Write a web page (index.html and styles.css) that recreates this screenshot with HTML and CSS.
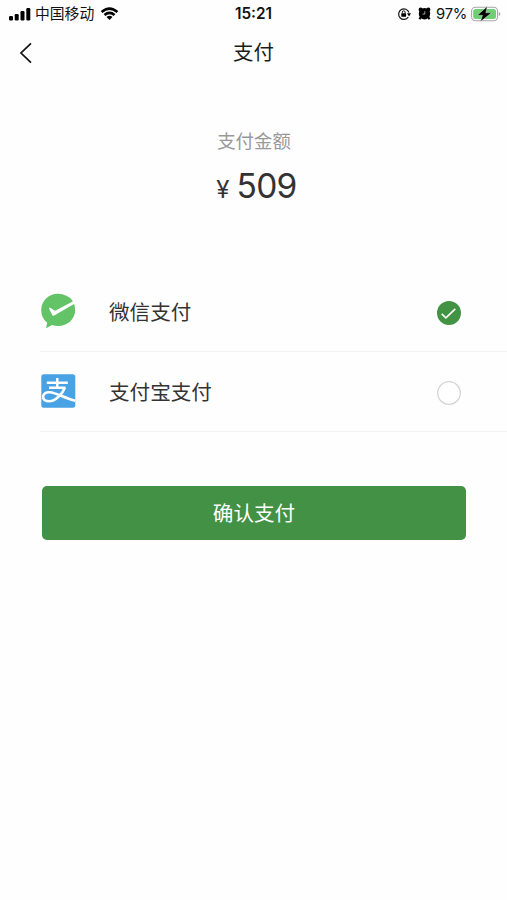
FILE: index.html
```
<!DOCTYPE html>
<html lang="zh-CN">
<head>
<meta charset="utf-8">
<title>支付</title>
<link rel="stylesheet" href="styles.css">
</head>
<body>
<header class="status">
  <div class="status-left">
    <svg class="signal" width="22" height="14" viewBox="0 0 22 14"><rect x="0" y="9" width="4" height="4.500" rx="1.200"/><rect x="5.700" y="7" width="4" height="6.500" rx="1.200"/><rect x="11.500" y="4" width="4" height="9.500" rx="1.200"/><rect x="17.300" y="1" width="4" height="12.500" rx="1.200"/></svg>
    <span class="carrier">中国移动</span>
    <svg class="wifi" width="19" height="14" viewBox="0 0 20 15"><path d="M1.500 5.400Q10-2 18.500 5.400M4.600 8.600Q10 4 15.400 8.600" fill="none" stroke="#000" stroke-width="2.700"/><path d="M6.800 10.800Q10 8.200 13.200 10.800L10 14Z"/></svg>
  </div>
  <time class="clock">15:21</time>
  <div class="status-right">
    <svg class="lock" width="14" height="14" viewBox="0 0 14 14"><path d="M11.300 10.200A5.300 5.300 0 1 1 12 5.500" fill="none" stroke="#111" stroke-width="1.200"/><path d="M10 6.300h4L12 9.400Z"/><rect x="4.300" y="6.200" width="4.800" height="3.600" rx=".6"/><path d="M5.300 6.500V5.200a1.400 1.400 0 0 1 2.800 0v1.300" fill="none" stroke="#111" stroke-width="1"/></svg>
    <svg class="alarm" width="13" height="13" viewBox="0 0 13 13"><circle cx="6.500" cy="6.700" r="5.700"/><circle cx="2.700" cy="2.700" r="2.100"/><circle cx="10.300" cy="2.700" r="2.100"/><path d="M2.800 10L1.500 12.300M10.200 10l1.300 2.300" stroke="#000" stroke-width="2.200"/><path d="M6.800 4.200v2.900H4.500" fill="none" stroke="#ddd" stroke-width=".7"/></svg>
    <span class="percent">97%</span>
    <svg class="battery" width="30" height="16" viewBox="0 0 30 16"><rect x=".6" y="1.200" width="26" height="13.600" rx="4" fill="#fff" stroke="#a5a8a5" stroke-width="1.100"/><rect x="2.200" y="2.900" width="22.800" height="10.200" rx="2.500" fill="#70cf74"/><path d="M27.800 6v4q1.600-.7 1.600-2t-1.600-2Z" fill="#a5a8a5"/><path d="M16.200 .4L6.500 9.200h5l-2 6.400L20.500 6.800h-5.700Z" stroke="#e9f8e9" stroke-width=".4"/></svg>
  </div>
</header>
<nav class="navbar">
  <svg class="back" width="14" height="22" viewBox="0 0 14 22"><path d="M12 1.300L2 11l10 9.700" fill="none" stroke="#111" stroke-width="1.700"/></svg>
  <h1 class="title">支付</h1>
</nav>
<main>
  <section class="summary">
    <p class="label">支付金额</p>
    <p class="amount"><span class="yen">¥</span><span class="number">509</span></p>
  </section>
  <section class="methods">
    <div class="method">
      <svg class="logo" width="36" height="36" viewBox="0 0 36 36"><path d="M18 .8C8.400.8 1.200 8 1.200 17.300c0 5.200 2.200 9.500 6 12.400L6 35.200l6-3.300c2 .8 4 1.100 6 1.100C27.600 33 35.200 26 35.200 17c0-5-2-9.500-5.400-12.300Z" fill="#62c466"/><path d="M9.200 14.800q1-.4 2 .4l2.800 2.100q.8.500 1.700.1L33.500 8l1 2.800L14.200 22.400q-1.500.9-2.100-.6l-2.900-5.700q-.5-1 0-1.300Z" fill="#fff"/><path d="M18 .8c6 0 11.300 2.900 14.400 7.400L25 11.800 16 4Z" fill="#62c466"/></svg>
      <span class="name">微信支付</span>
      <svg class="radio" width="24" height="24" viewBox="0 0 24 24"><circle cx="12" cy="12" r="12" fill="#429343"/><path d="M4.700 12.800l4.200 4 9.400-9" fill="none" stroke="#fff" stroke-width="1.600"/></svg>
    </div>
    <div class="method">
      <svg class="logo" width="36" height="36" viewBox="0 0 36 36"><rect x="1.300" y="1.300" width="34" height="33.500" rx="2.500" fill="#48a2e4"/><path d="M17.300 5v9M6.800 9.700h21M9 14.700h16.500" fill="none" stroke="#fff" stroke-width="2.400"/><path d="M24.800 14.700C22.300 21.500 15 28.300 9.200 28.300c-4.300 0-6.300-2-6.100-4.700.2-3 3.200-4.700 6.900-4.300C16.500 19.900 25 25.300 35.300 27.800" fill="none" stroke="#fff" stroke-width="2.600"/></svg>
      <span class="name">支付宝支付</span>
      <svg class="radio" width="24" height="24" viewBox="0 0 24 24"><circle cx="12" cy="12" r="11.300" fill="#fff" stroke="#d5d5d5" stroke-width="1.300"/></svg>
    </div>
  </section>
  <button class="confirm" type="button">确认支付</button>
</main>
</body>
</html>
```
FILE: styles.css
```
* { box-sizing: border-box; }
body {
  margin: 0;
  min-height: 900px;
  background: #fefefe;
  color: #333;
  font-family: Inter, "Noto Sans CJK SC", sans-serif;
}
svg { display: block; flex: none; }
p, h1 { margin: 0; }
.status {
  display: grid;
  grid-template-columns: 1fr auto 1fr;
  align-items: center;
  height: 27px;
  padding: 0 6px 0 9px;
  color: #111;
}
.status-left, .status-right { display: flex; align-items: center; }
.status-right { justify-content: flex-end; }
.carrier { margin-left: 4px; padding-top: 1px; font-size: 14.8px; line-height: 22px; }
.wifi { margin-left: 6px; }
.clock { margin-right: 3px; font-size: 15.3px; font-weight: 600; line-height: 20px; }
.alarm { margin-left: 7px; }
.percent { margin-left: 5px; font-size: 14.8px; letter-spacing: -.3px; }
.battery { margin-left: 4px; }
.navbar {
  display: grid;
  grid-template-columns: 1fr auto 1fr;
  align-items: center;
  height: 52px;
  padding: 0 19px;
}
.title { color: #1c1c1c; font-size: 20.5px; font-weight: 400; line-height: 30px; }
.summary {
  display: flex;
  flex-direction: column;
  align-items: center;
  height: 193px;
  padding-top: 48px;
}
.label { padding-left: 1px; color: #999; font-size: 18.4px; line-height: 28px; }
.amount { display: flex; align-items: baseline; margin-top: 10px; padding-left: 6px; line-height: 42px; }
.yen { margin-right: 7px; font-size: 24px; }
.number { font-size: 33.5px; letter-spacing: -.7px; }
.methods { margin-left: 40px; }
.method {
  display: flex;
  align-items: center;
  height: 80px;
  padding-right: 46px;
  border-bottom: 1px solid #f3f3f3;
}
.logo { margin-bottom: 2px; }
.name { flex: 1; margin-left: 33px; padding-top: 2px; font-size: 20.6px; line-height: 30px; }
.radio { margin-top: 3px; }
.confirm {
  display: block;
  width: 424px;
  height: 54px;
  margin: 54px 0 0 42px;
  padding: 2px 0 0;
  border: 0;
  border-radius: 5px;
  background: #429144;
  color: #fff;
  font: 400 20.6px/52px Inter, "Noto Sans CJK SC", sans-serif;
}
```
